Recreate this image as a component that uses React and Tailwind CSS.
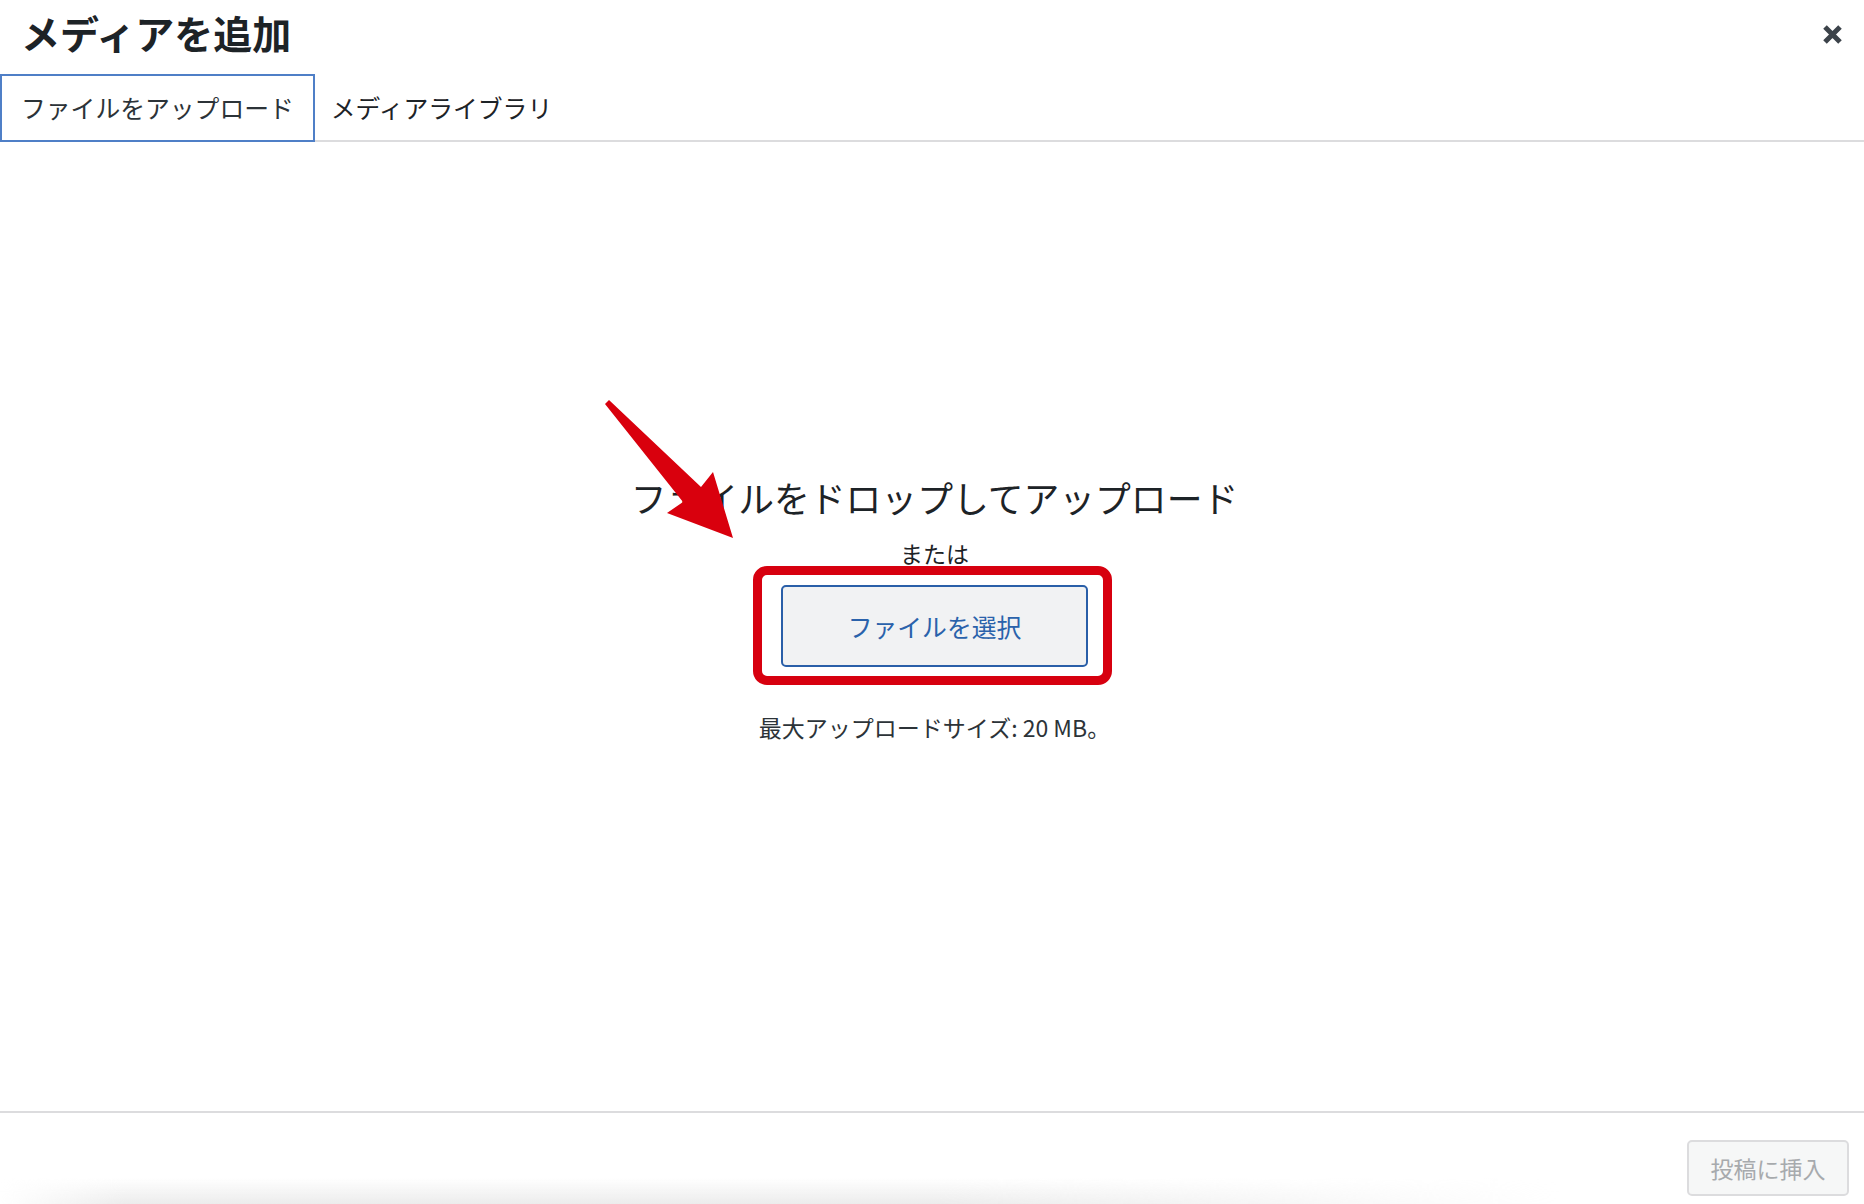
import { useState } from 'react'

const font = "font-['Noto_Sans_CJK_JP','Noto_Sans',sans-serif]"

function CloseIcon() {
  return (
    <svg width="21" height="21" viewBox="0 0 21 21">
      <path d="M3 3 L18 18 M18 3 L3 18" stroke="#3c434a" strokeWidth="5" strokeLinecap="butt" />
    </svg>
  )
}

// red annotation arrow, drawn over the page
function Arrow() {
  return (
    <svg className="absolute inset-0 pointer-events-none" width="1864" height="1204" viewBox="0 0 1864 1204">
      <polygon
        fill="#d9000d"
        points="605,404 683,502 667,513 733,538 713,472 701,487 609,400"
      />
    </svg>
  )
}

export default function App() {
  const [tab, setTab] = useState('upload')

  return (
    <div className={`relative w-[1864px] h-[1204px] bg-white overflow-hidden flex flex-col text-[#1d2327] ${font}`}>
      {/* Header */}
      <div className="h-[74px] flex items-start justify-between flex-shrink-0">
        <h1 className="h-[64px] flex items-center pl-[21px] text-[39px] font-bold leading-none">メディアを追加</h1>
        <button className="mt-[24px] mr-[21px]"><CloseIcon /></button>
      </div>

      {/* Tabs */}
      <div className="h-[68px] flex border-b-2 border-[#dcdcde] flex-shrink-0">
        <button onClick={() => setTab('upload')}
          className={`h-[68px] px-[19px] pb-[2px] text-[24.8px] leading-none relative z-10 ${tab === 'upload' ? 'border-2 border-[#4f7fc7] bg-white text-[#2c3338]' : 'border-2 border-transparent'}`}>
          ファイルをアップロード
        </button>
        <button onClick={() => setTab('library')}
          className={`h-[68px] pl-[14px] pr-[19px] pb-[2px] text-[24.8px] leading-none relative z-10 ${tab === 'library' ? 'border-2 border-[#4f7fc7] bg-white' : 'border-2 border-transparent'}`}>
          メディアライブラリ
        </button>
      </div>

      {/* Upload area */}
      <div className="flex-1 flex flex-col items-center pt-[330px] pl-[5px]">
        <h2 className="text-[35.8px] leading-[50px]">ファイルをドロップしてアップロード</h2>
        <p className="mt-[19px] text-[23px] leading-[24px]">または</p>
        <div className="relative mt-[20px]">
          <button className="w-[307px] h-[82px] border-2 border-[#2a5fa8] rounded-[5px] bg-[#f1f2f3] text-[#2a62ab] text-[24.8px] leading-none">
            ファイルを選択
          </button>
          <span className="absolute -left-[28px] -top-[19px] -right-[24px] -bottom-[18px] border-[9px] border-[#d7000f] rounded-[14px] pointer-events-none" />
        </div>
        <p className="mt-[45px] text-[23px] leading-[30px] text-[#2c3338]">最大アップロードサイズ: 20 MB。</p>
      </div>

      {/* Footer */}
      <div className="h-[93px] border-t-2 border-[#dcdcde] flex justify-end pt-[27px] pr-[15px] flex-shrink-0">
        <button disabled className="w-[162px] h-[56px] border-2 border-[#dcdcde] rounded-[5px] bg-[#f6f7f7] text-[#a7aaad] text-[23px] leading-none">
          投稿に挿入
        </button>
      </div>

      <div className="absolute bottom-0 left-0 w-[1560px] h-[26px] bg-linear-to-t from-[#ececec] to-white/0 pointer-events-none [mask-image:linear-gradient(to_right,transparent,black_8%,black_60%,transparent)]" />

      <Arrow />
    </div>
  )
}
